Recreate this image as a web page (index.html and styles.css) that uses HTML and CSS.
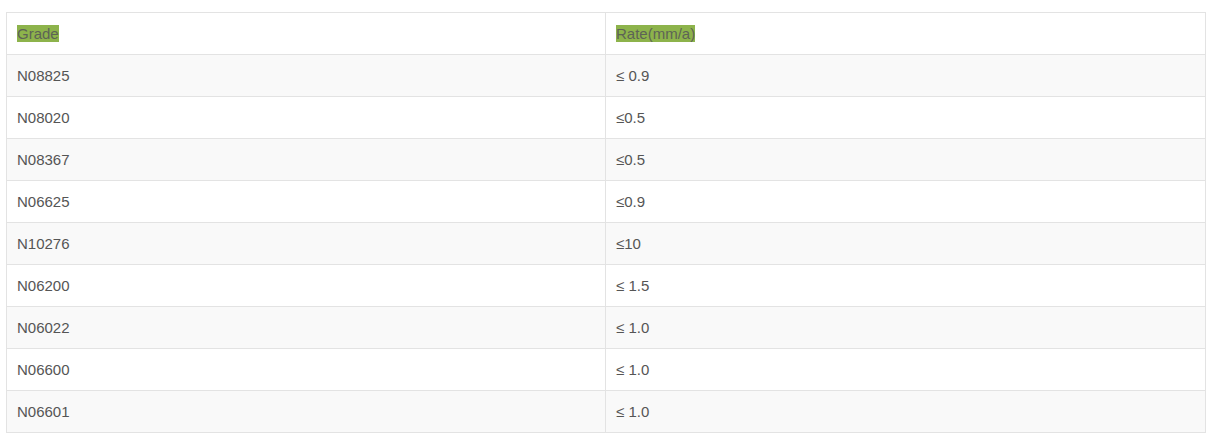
FILE: index.html
```html
<!DOCTYPE html>
<html>
<head>
<meta charset="utf-8">
<link rel="stylesheet" href="styles.css">
</head>
<body>
<div class="wrap">
<table class="grid">
<thead>
<tr><th class="c1"><span class="hl">Grade</span></th><th><span class="hl">Rate(mm/a)</span></th></tr>
</thead>
<tbody>
<tr><td>N08825</td><td>≤ 0.9</td></tr>
<tr><td>N08020</td><td>≤0.5</td></tr>
<tr><td>N08367</td><td>≤0.5</td></tr>
<tr><td>N06625</td><td>≤0.9</td></tr>
<tr><td>N10276</td><td>≤10</td></tr>
<tr><td>N06200</td><td>≤ 1.5</td></tr>
<tr><td>N06022</td><td>≤ 1.0</td></tr>
<tr><td>N06600</td><td>≤ 1.0</td></tr>
<tr><td>N06601</td><td>≤ 1.0</td></tr>
</tbody>
</table>
</div>
</body>
</html>
```
FILE: styles.css
```css
html, body { margin: 0; padding: 0; background: #fff; }
.wrap { padding: 12px 6px; }
.grid {
  width: 1200px;
  border-collapse: collapse;
  table-layout: fixed;
  font-family: "Liberation Sans", Arial, sans-serif;
  font-size: 15px;
  color: #555;
}
.grid .c1 { width: 578px; }
.grid th, .grid td {
  border: 1px solid #e3e3e3;
  padding: 10px;
  line-height: 21px;
  text-align: left;
  font-weight: normal;
}
.grid tbody tr:nth-child(odd) td { background: #f9f9f9; }
.hl { background: #8db34b; color: #5d6356; }
```
